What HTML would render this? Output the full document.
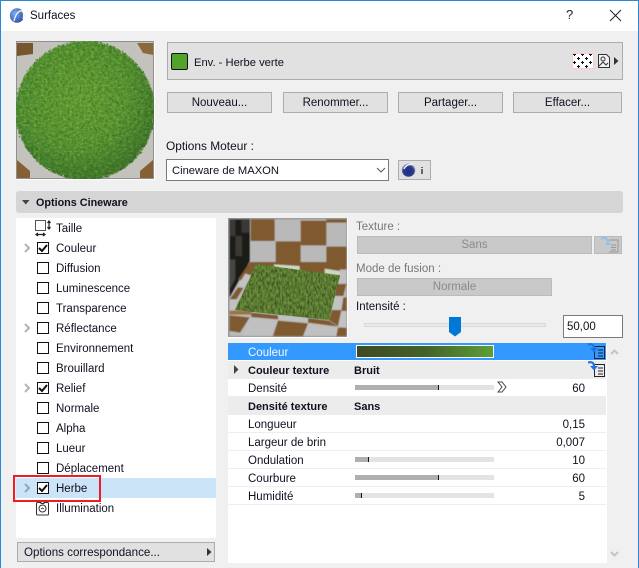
<!DOCTYPE html>
<html><head><meta charset="utf-8"><style>
html,body{margin:0;padding:0;background:#f0f0f0}
#w{position:relative;width:639px;height:568px;overflow:hidden;background:#f0f0f0;font-family:"Liberation Sans",sans-serif;font-size:11.5px;color:#101020}
#w div,#w svg{position:absolute}
.t{height:16px;line-height:16px;white-space:nowrap;margin-top:1px}
.b{font-weight:bold}
.btn{box-sizing:border-box;background:#e1e1e1;border:1px solid #adadad;text-align:center;line-height:20px}
.cb{box-sizing:border-box;width:12px;height:12px;left:37px;background:#fff;border:1px solid #111}
.r{box-sizing:border-box;left:228px;width:378px;height:18px;border-bottom:1px solid #eee}
.g{background:#ececec;border:0;height:18px}
.v{right:54px;text-align:right}
.tr{left:355px;width:139px;height:5px;background:#e3e3e3}
.fl{left:0;top:0;height:5px;background:#b0b0b0;border-right:1px solid #111}
.dis{background:#c9c9c9;border:1px solid #bbb;color:#8a8a8a;box-sizing:border-box;text-align:center;line-height:17px}
</style></head><body><div id="w">
<div style="left:0;top:0;width:639px;height:31px;background:#fff"></div>
<div style="left:0;top:0;width:639px;height:1px;background:#2b88d8"></div>
<div style="left:0;top:0;width:1px;height:568px;background:#2b88d8"></div>
<div style="left:638px;top:0;width:1px;height:568px;background:#2b88d8"></div>
<svg style="left:9px;top:7px" width="17" height="17" viewBox="0 0 17 17"><defs><radialGradient id="lg" cx=".35" cy=".35" r=".8"><stop offset="0" stop-color="#7faaf0"/><stop offset="1" stop-color="#24479f"/></radialGradient></defs><circle cx="8" cy="8.5" r="7.2" fill="url(#lg)"/><path d="M5 14C6.500 7 10 3 13 4C15 6 15 9 14 12" fill="none" stroke="#fff" stroke-width="1.2"/></svg>
<div class="t" style="left:30px;top:7px;font-size:11.5px">Surfaces</div>
<div class="t" style="left:566px;top:6px;font-size:13px;color:#222">?</div>
<svg style="left:609px;top:9px" width="13" height="13"><path d="M1 1L12 12M12 1L1 12" stroke="#222" stroke-width="1" fill="none"/></svg>

<!-- sphere preview -->
<div style="left:16px;top:41px;width:139px;height:139px;background:#fff"></div>
<svg style="left:16px;top:41px" width="138" height="138" viewBox="0 0 138 138">
<defs>
<filter id="fuzz" x="-10%" y="-10%" width="120%" height="120%" color-interpolation-filters="sRGB"><feTurbulence type="fractalNoise" baseFrequency="0.45" numOctaves="2" seed="3" result="n"/><feDisplacementMap in="SourceGraphic" in2="n" scale="6" xChannelSelector="R" yChannelSelector="G"/></filter>
<radialGradient id="sph" cx=".47" cy=".42" r=".6"><stop offset="0" stop-color="#68a034"/><stop offset=".5" stop-color="#5a9530"/><stop offset=".85" stop-color="#4b8a30"/><stop offset="1" stop-color="#47852f"/></radialGradient>
<radialGradient id="shade" cx=".42" cy=".38" r=".72"><stop offset=".55" stop-color="#1c3a12" stop-opacity="0"/><stop offset="1" stop-color="#1c3a12" stop-opacity=".3"/></radialGradient>
<clipPath id="sc"><circle cx="69" cy="69.500" r="70"/></clipPath>
<filter id="dark" x="0" y="0" width="100%" height="100%" color-interpolation-filters="sRGB"><feTurbulence type="fractalNoise" baseFrequency="0.5 0.3" numOctaves="3" seed="21"/><feColorMatrix type="matrix" values="0 0 0 0 .2 0 0 0 0 .38 0 0 0 0 .14 0 1.5 0 0 -.55"/></filter>
<filter id="lite" x="0" y="0" width="100%" height="100%" color-interpolation-filters="sRGB"><feTurbulence type="fractalNoise" baseFrequency="0.28 0.5" numOctaves="3" seed="40"/><feColorMatrix type="matrix" values="0 0 0 0 .52 0 0 0 0 .78 0 0 0 0 .28 1.3 0 0 0 -.55"/></filter>
</defs>
<rect width="138" height="138" fill="#8f8f8b"/>
<rect x="1" y="1" width="136" height="136" fill="#c4c2bc"/>
<path d="M1 2H17V13L1 15Z" fill="#77562e"/>
<path d="M121 2H137V14L127 12Z" fill="#8a6a3a"/>
<path d="M1 119L14 130V137H1Z" fill="#856034"/>
<path d="M137 119L124 130V137H137Z" fill="#856034"/>
<g filter="url(#fuzz)"><circle cx="69" cy="69.500" r="69.500" fill="url(#sph)"/></g>
<g clip-path="url(#sc)"><rect width="138" height="138" filter="url(#dark)"/><rect width="138" height="138" filter="url(#lite)"/><rect width="138" height="138" fill="url(#shade)"/></g>
</svg>

<!-- env panel -->
<div style="box-sizing:border-box;left:167px;top:42px;width:456px;height:38px;background:#e1e1e1;border:1px solid #adadad"></div>
<div style="box-sizing:border-box;left:171px;top:53px;width:17px;height:17px;background:#52a32b;border:1px solid #111;border-radius:2px"></div>
<div class="t" style="left:194px;top:54px;font-size:11.2px">Env. - Herbe verte</div>
<svg style="left:572px;top:53px" width="22" height="16" viewBox="0 0 22 16"><defs><pattern id="ht" width="8" height="8" patternUnits="userSpaceOnUse"><path d="M2 0H3V1H4V2H3V3H2V2H1V1H2ZM6 4H7V5H8V6H7V7H6V6H5V5H6Z" fill="#111"/></pattern></defs><rect width="22" height="16" fill="#ffc9c9"/><rect x="1" y="1" width="20" height="14" fill="#fff"/><rect x="1" y="1" width="20" height="14" fill="url(#ht)"/></svg>
<svg style="left:598px;top:54px" width="12" height="14" viewBox="0 0 12 14"><path d="M.5 .5H8.500L11.500 3.500V13.500H.5Z" fill="#f2f2f2" stroke="#333"/><circle cx="5" cy="5" r="2" fill="none" stroke="#333"/><path d="M1 12L5 8L8 11L10 9" fill="none" stroke="#333"/></svg>
<svg style="left:614px;top:57px" width="5" height="8"><path d="M0 0L4.500 4L0 8Z" fill="#333"/></svg>

<div class="btn" style="left:167px;top:92px;width:105px;height:21px">Nouveau...</div>
<div class="btn" style="left:283px;top:92px;width:105px;height:21px">Renommer...</div>
<div class="btn" style="left:398px;top:92px;width:105px;height:21px">Partager...</div>
<div class="btn" style="left:513px;top:92px;width:109px;height:21px">Effacer...</div>

<div class="t" style="left:166px;top:137px;font-size:11.9px">Options Moteur :</div>
<div style="box-sizing:border-box;left:166px;top:159px;width:223px;height:22px;background:#fff;border:1px solid #7a7a7a"></div>
<div class="t" style="left:172px;top:162px;font-size:11.2px">Cineware de MAXON</div>
<svg style="left:376px;top:167px" width="10" height="7"><path d="M1 1L5 5L9 1" fill="none" stroke="#555"/></svg>
<div class="btn" style="left:398px;top:160px;width:33px;height:20px"></div>
<svg style="left:401px;top:162px" width="15" height="16"><defs><radialGradient id="c4" cx=".5" cy=".6" r=".55"><stop offset="0" stop-color="#1a2f8a"/><stop offset=".7" stop-color="#2a3c88"/><stop offset="1" stop-color="#b8bcc8"/></radialGradient></defs><circle cx="7.500" cy="8" r="6.800" fill="url(#c4)"/><path d="M3 7C5 3 9 2 12 2" stroke="#fff" fill="none" stroke-width="1.200"/></svg>
<div style="left:421px;top:167px;width:2px;height:1px;background:#666"></div><div style="left:421px;top:169px;width:2px;height:5px;background:#666"></div>

<!-- header -->
<div style="left:16px;top:191px;width:607px;height:22px;background:#d5d5d5;border-radius:3px"></div>
<svg style="left:22px;top:200px" width="8" height="5"><path d="M0 0H7.500L3.750 4.500Z" fill="#444"/></svg>
<div class="t b" style="left:36px;top:194px;font-size:10.8px">Options Cineware</div>

<!-- list -->
<div style="left:16px;top:218px;width:200px;height:320px;background:#fff"></div>
<div style="left:16px;top:478px;width:200px;height:20px;background:#cce4f7"></div>
<svg style="left:35px;top:220px" width="17" height="17" viewBox="0 0 17 17"><rect x=".5" y=".5" width="10" height="10" fill="#fff" stroke="#555"/><path d="M14 1V9M12.500 3L14 1L15.500 3M12.500 7L14 9L15.500 7" stroke="#222" fill="none" stroke-width="1.200"/><path d="M1 14.500H10M3 13L1 14.500L3 16M8 13L10 14.500L8 16" stroke="#222" fill="none" stroke-width="1.200"/></svg>
<div class="t" style="left:56px;top:220px">Taille</div>

<div class="cb" style="top:242px"></div><div class="t" style="left:56px;top:240px">Couleur</div>
<div class="cb" style="top:262px"></div><div class="t" style="left:56px;top:260px">Diffusion</div>
<div class="cb" style="top:282px"></div><div class="t" style="left:56px;top:280px">Luminescence</div>
<div class="cb" style="top:302px"></div><div class="t" style="left:56px;top:300px">Transparence</div>
<div class="cb" style="top:322px"></div><div class="t" style="left:56px;top:320px">Réflectance</div>
<div class="cb" style="top:342px"></div><div class="t" style="left:56px;top:340px">Environnement</div>
<div class="cb" style="top:362px"></div><div class="t" style="left:56px;top:360px">Brouillard</div>
<div class="cb" style="top:382px"></div><div class="t" style="left:56px;top:380px">Relief</div>
<div class="cb" style="top:402px"></div><div class="t" style="left:56px;top:400px">Normale</div>
<div class="cb" style="top:422px"></div><div class="t" style="left:56px;top:420px">Alpha</div>
<div class="cb" style="top:442px"></div><div class="t" style="left:56px;top:440px">Lueur</div>
<div class="cb" style="top:462px"></div><div class="t" style="left:56px;top:460px">Déplacement</div>
<div class="cb" style="top:482px"></div><div class="t" style="left:56px;top:480px">Herbe</div>
<svg style="left:38px;top:243px" width="10" height="10"><path d="M1 5L4 8L9 2" fill="none" stroke="#111" stroke-width="2"/></svg>
<svg style="left:38px;top:383px" width="10" height="10"><path d="M1 5L4 8L9 2" fill="none" stroke="#111" stroke-width="2"/></svg>
<svg style="left:38px;top:483px" width="10" height="10"><path d="M1 5L4 8L9 2" fill="none" stroke="#111" stroke-width="2"/></svg>
<svg style="left:24px;top:243px" width="7" height="10"><path d="M1 1L5 5L1 9" fill="none" stroke="#b4b4b4" stroke-width="2"/></svg>
<svg style="left:24px;top:323px" width="7" height="10"><path d="M1 1L5 5L1 9" fill="none" stroke="#b4b4b4" stroke-width="2"/></svg>
<svg style="left:24px;top:383px" width="7" height="10"><path d="M1 1L5 5L1 9" fill="none" stroke="#b4b4b4" stroke-width="2"/></svg>
<svg style="left:24px;top:483px" width="7" height="10"><path d="M1 1L5 5L1 9" fill="none" stroke="#9aa4ae" stroke-width="2"/></svg>
<svg style="left:36px;top:500px" width="14" height="16" viewBox="0 0 14 16"><rect x=".5" y="2.500" width="12" height="12.500" rx="1" fill="#fff" stroke="#333"/><circle cx="6.500" cy="8.500" r="3.500" fill="none" stroke="#333"/><rect x="5" y=".5" width="3" height="3" fill="#fff" stroke="#333"/><path d="M5 9L6.500 8L8 9" fill="none" stroke="#333" stroke-width=".8"/></svg>
<div class="t" style="left:56px;top:500px">Illumination</div>
<div style="box-sizing:border-box;left:13px;top:475px;width:88px;height:27px;border:2px solid #ee1c25"></div>

<div class="btn" style="left:17px;top:542px;width:198px;height:20px;text-align:left;padding-left:6px;line-height:19px;font-size:11.6px">Options correspondance...</div>
<svg style="left:207px;top:548px" width="5" height="8"><path d="M0 0L4.500 4L0 8Z" fill="#333"/></svg>

<!-- floor preview -->
<svg style="left:228px;top:218px" width="120" height="120" viewBox="0 0 120 120">
<defs>
<filter id="g2" x="0" y="0" width="100%" height="100%" color-interpolation-filters="sRGB"><feTurbulence type="fractalNoise" baseFrequency="0.55 0.25" numOctaves="3" seed="12"/><feColorMatrix type="matrix" values="0 0 0 0 .2 0 0 0 0 .24 0 0 0 0 .1 1.6 0 0 0 -.45"/></filter>
<filter id="g3" x="0" y="0" width="100%" height="100%" color-interpolation-filters="sRGB"><feTurbulence type="fractalNoise" baseFrequency="0.55 0.22" numOctaves="3" seed="33"/><feColorMatrix type="matrix" values="0 0 0 0 .5 0 0 0 0 .62 0 0 0 0 .26 1.4 0 0 0 -.6"/></filter>
<clipPath id="gp"><path d="M28.300 46L112 57.500L101 102L7 92Z"/></clipPath>
<filter id="bl"><feGaussianBlur stdDeviation="1.500"/></filter>
</defs>
<rect width="120" height="120" fill="#fff"/>
<rect width="119" height="119" fill="#9a9a9a"/>
<g transform="translate(0,-2) scale(.33333)"><g filter="url(#bl)">
<rect x="5" y="10" width="350" height="350" fill="#b9b9b9"/>
<path d="M5 10H66V135L5 245Z" fill="#1c1a18"/>
<path d="M5 10H22V60H5ZM40 10H66V50H40ZM22 60H42V120H22Z" fill="#3a3836"/>
<path d="M5 130H22V190L5 220Z" fill="#454545"/>
<path d="M68 10H140V75H68Z" fill="#7f5a2e"/>
<path d="M218 14H295V88H218Z" fill="#7f5a2e"/>
<path d="M295 10H355V20H295Z" fill="#7f5a2e"/>
<path d="M143 76H218V150H143Z" fill="#7f5a2e"/>
<path d="M295 92H355V160H295Z" fill="#7f5a2e"/>
<path d="M66 138H335V180L85 160L50 195L30 190Z" fill="#7f5a2e"/>
<path d="M30 208L52 172L72 180L46 215Z" fill="#c2c2c2"/>
<path d="M5 250L30 214L46 216L25 250Z" fill="#7f5a2e"/>
<path d="M5 250H28L20 284H5Z" fill="#c2c2c2"/>
<path d="M5 284H70V296L5 296Z" fill="#9a7440"/>
<path d="M5 298L65 304L36 350L5 345Z" fill="#7f5a2e"/>
<path d="M65 304L150 312L130 360H40Z" fill="#c0c0c0"/>
<path d="M150 314L240 322L225 360H135Z" fill="#7f5a2e"/>
<path d="M240 322L330 332L325 360H228Z" fill="#c0c0c0"/>
<path d="M330 335H355V360H325Z" fill="#7f5a2e"/>
<path d="M70 290L150 298V310L70 303Z" fill="#7f5a2e"/>
<path d="M150 298L240 306V320L150 312Z" fill="#c0c0c0"/>
<path d="M240 306L302 314L330 332L240 320Z" fill="#7f5a2e"/>
<path d="M335 165H355V200H330Z" fill="#c2c2c2"/>
<path d="M326 204H355L346 240H318Z" fill="#7f5a2e"/>
<path d="M318 240H350L340 282H312Z" fill="#c2c2c2"/>
<path d="M346 244H355V285H340Z" fill="#7f5a2e"/>
<path d="M340 285H355V336L330 330Z" fill="#c2c2c2"/>
<path d="M312 282H340L330 330L302 312Z" fill="#7f5a2e"/>
<path d="M138 145L215 150V165L138 160ZM290 158L335 165V178L290 172Z" fill="#cdd6c4"/>
</g></g>
<path d="M28.300 46L112 57.500L101 102L7 92Z" fill="#66903a"/>
<g clip-path="url(#gp)"><rect width="120" height="120" filter="url(#g2)"/><rect width="120" height="120" filter="url(#g3)"/></g>
</svg>

<!-- texture controls -->
<div class="t" style="left:356px;top:218px;color:#777">Texture :</div>
<div class="dis" style="left:357px;top:236px;width:235px;height:18px">Sans</div>
<div class="dis" style="left:594px;top:236px;width:28px;height:18px"></div>
<svg style="left:600px;top:237px" width="20" height="16" viewBox="0 0 20 16"><path d="M1 2C5 0 8 1 8 6" fill="none" stroke="#8ec0f0" stroke-width="2"/><path d="M5 6H11L8 9Z" fill="#8ec0f0"/><path d="M9 3H18V15H9" fill="none" stroke="#999"/><path d="M11 8H16M11 10.500H16M11 13H16" stroke="#999"/></svg>
<div class="t" style="left:356px;top:260px;color:#777">Mode de fusion :</div>
<div class="dis" style="left:357px;top:278px;width:195px;height:18px">Normale</div>
<div class="t" style="left:356px;top:298px">Intensité :</div>
<div style="box-sizing:border-box;left:364px;top:323px;width:182px;height:4px;background:#e7eaea;border:1px solid #d6dada"></div>
<svg style="left:449px;top:317px" width="12" height="20"><path d="M0 0H12V15L6 19.500L0 15Z" fill="#0078d7"/></svg>
<div style="box-sizing:border-box;left:563px;top:315px;width:60px;height:23px;background:#fff;border:1px solid #7a7a7a;padding-left:3px;line-height:23px;color:#111;font-size:11.5px">50,00</div>

<!-- table -->
<div style="left:228px;top:343px;width:379px;height:220px;background:#fff"></div>
<div class="r" style="top:343px;background:#3399ff;height:17px;border:0"></div>
<div class="t" style="left:248px;top:344px;color:#f4f8ff">Couleur</div>
<div style="box-sizing:border-box;left:356px;top:345px;width:138px;height:13px;border:1px solid #fff;background:linear-gradient(90deg,#3f4a22,#43612a 50%,#5d9f35)"></div>
<div class="r g" style="top:361px"></div>
<svg style="left:234px;top:365px" width="5" height="9"><path d="M0 0L4.500 4.500L0 9Z" fill="#444"/></svg>
<div class="t b" style="left:248px;top:362px;font-size:11px">Couleur texture</div>
<div class="t b" style="left:354px;top:362px;font-size:11px">Bruit</div>
<div class="r" style="top:379px"></div>
<div class="t" style="left:248px;top:380px">Densité</div>
<div class="tr" style="top:385px"><div class="fl" style="width:83px"></div></div>
<svg style="left:497px;top:381px" width="10" height="12"><path d="M1 1L5 1L9 6L5 11L1 11L5 6Z" fill="#fff" stroke="#444"/></svg>
<div class="t v" style="top:380px">60</div>
<div class="r g" style="top:397px"></div>
<div class="t b" style="left:248px;top:398px;font-size:11px">Densité texture</div>
<div class="t b" style="left:354px;top:398px;font-size:11px">Sans</div>
<div class="r" style="top:415px"></div>
<div class="t" style="left:248px;top:416px">Longueur</div><div class="t v" style="top:416px">0,15</div>
<div class="r" style="top:433px"></div>
<div class="t" style="left:248px;top:434px">Largeur de brin</div><div class="t v" style="top:434px">0,007</div>
<div class="r" style="top:451px"></div>
<div class="t" style="left:248px;top:452px">Ondulation</div><div class="t v" style="top:452px">10</div>
<div class="tr" style="top:457px"><div class="fl" style="width:13px"></div></div>
<div class="r" style="top:469px"></div>
<div class="t" style="left:248px;top:470px">Courbure</div><div class="t v" style="top:470px">60</div>
<div class="tr" style="top:475px"><div class="fl" style="width:83px"></div></div>
<div class="r" style="top:487px"></div>
<div class="t" style="left:248px;top:488px">Humidité</div><div class="t v" style="top:488px">5</div>
<div class="tr" style="top:493px"><div class="fl" style="width:6px"></div></div>

<svg style="left:588px;top:343px" width="18" height="16" viewBox="0 0 18 16"><path d="M6.500 3.500H16.500V15.500H6.500Z" fill="none" stroke="#223"/><path d="M10 7H15M10 10H15M10 13H15" stroke="#223"/><path d="M0 1.500C4 .5 6 2 6 5" fill="none" stroke="#1f74e0" stroke-width="2.200"/><path d="M2 5H10L6 9.500Z" fill="#1f74e0"/></svg>
<svg style="left:588px;top:361px" width="18" height="17" viewBox="0 0 18 17"><path d="M6.500 3.500H16.500V15.500H6.500Z" fill="none" stroke="#223"/><path d="M10 7H15M10 10H15M10 13H15" stroke="#223"/><path d="M0 1.500C4 .5 6 2 6 5" fill="none" stroke="#1f74e0" stroke-width="2.200"/><path d="M2 5H10L6 9.500Z" fill="#1f74e0"/></svg>
<svg style="left:610px;top:349px" width="10" height="7"><path d="M1 5L4.500 1.500L8 5" fill="none" stroke="#c4c4c4" stroke-width="2"/></svg>
<svg style="left:610px;top:551px" width="10" height="7"><path d="M1 1L4.500 4.500L8 1" fill="none" stroke="#c4c4c4" stroke-width="2"/></svg>
</div></body></html>
